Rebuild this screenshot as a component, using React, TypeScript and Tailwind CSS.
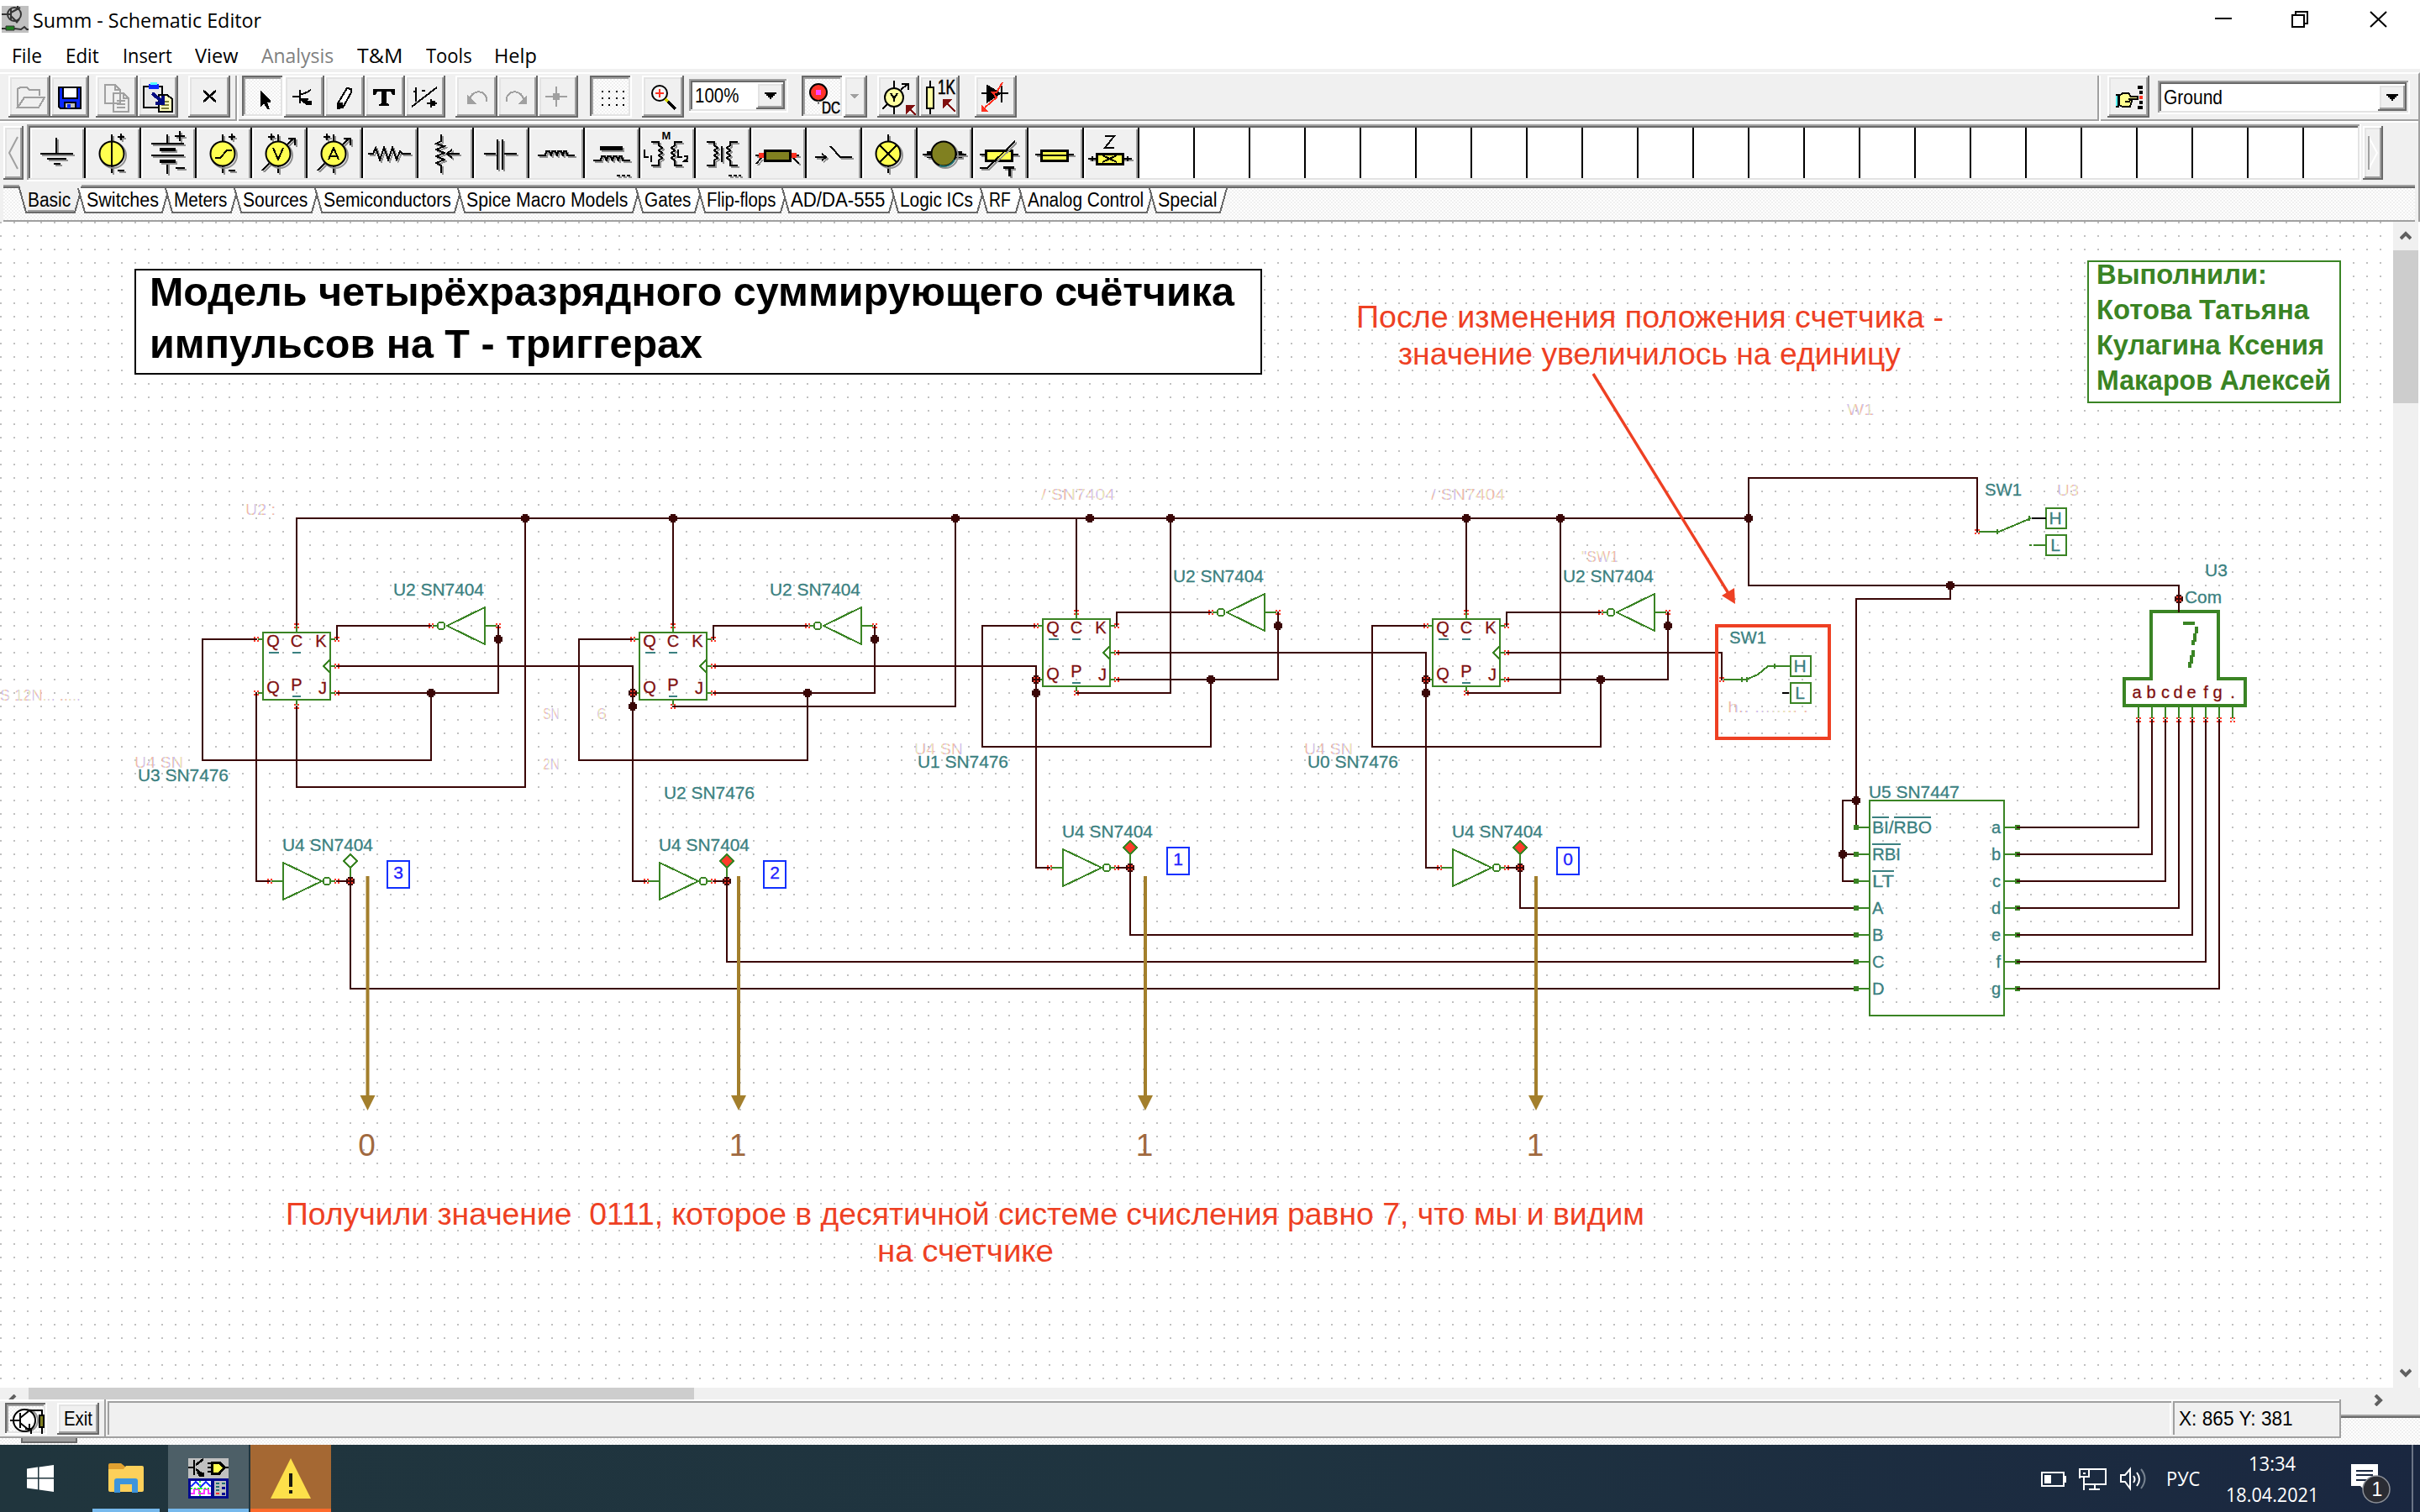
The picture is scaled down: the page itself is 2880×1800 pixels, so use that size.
import { useLayoutEffect, useRef, useState, type ReactNode } from "react";

const RAISED =
  "bg-[#f0f0f0] shadow-[inset_-2px_-2px_#696969,inset_2px_2px_#fff,inset_-4px_-4px_#a0a0a0,inset_4px_4px_#e3e3e3]";
const DITHER = "bg-[repeating-conic-gradient(#fff_0_25%,#f0f0f0_0_50%)] bg-[length:4px_4px]";
const SUNKEN =
  "bg-[repeating-conic-gradient(#fff_0_25%,#f0f0f0_0_50%)] bg-[length:4px_4px] shadow-[inset_-2px_-2px_#fff,inset_2px_2px_#696969,inset_-4px_-4px_#e3e3e3,inset_4px_4px_#a0a0a0]";
const FIELD =
  "bg-white shadow-[inset_-2px_-2px_#fff,inset_2px_2px_#a0a0a0,inset_-4px_-4px_#e3e3e3,inset_4px_4px_#696969]";

/* Text squeezed or stretched to a fixed width. */
function Fit({ w, children, className = "" }: { w: number; children: string; className?: string }) {
  const ref = useRef<HTMLSpanElement>(null);
  const [s, setS] = useState(1);
  useLayoutEffect(() => {
    if (ref.current) setS(w / ref.current.offsetWidth);
  }, [w]);
  return (
    <span className={"inline-block whitespace-nowrap " + className} style={{ width: w }}>
      <span ref={ref} className="inline-block origin-left" style={{ transform: `scaleX(${s})` }}>
        {children}
      </span>
    </span>
  );
}

function Btn({ w, ml = 0, pressed, children }: { w: number; ml?: number; pressed?: boolean; children?: ReactNode }) {
  return (
    <div className={"h-[50px] shrink-0 " + (pressed ? SUNKEN : RAISED)} style={{ width: w, marginLeft: ml }}>
      <svg width={w} height="50" viewBox={`0 0 ${w} 50`} fill="none" stroke="#000" strokeWidth="2" shapeRendering="crispEdges">
        {children}
      </svg>
    </div>
  );
}

function Etched({ ml }: { ml: number }) {
  return <div className="h-[54px] w-1 shrink-0 self-start border-l-2 border-r-2 border-l-[#a0a0a0] border-r-white" style={{ marginLeft: ml }} />;
}

function DropArrow() {
  return (
    <div className={"flex h-full w-[34px] items-center justify-center " + RAISED}>
      <svg width="14" height="8" viewBox="0 0 14 8" shapeRendering="crispEdges">
        <path d="M0 0h14v2h-2v2h-2v2h-2v2h-2v-2h-2v-2h-2v-2h-2z" />
      </svg>
    </div>
  );
}

function Toolbar() {
  return (
    <div className="flex h-14 items-start border-b-2 border-[#a0a0a0] bg-[#f0f0f0] pt-[2px]">
      <Btn w={50} ml={10}>
        <path stroke="#a0a0a0" d="M11 38V16l3-2h8l3 3h12v7M11 38l8-12h24l-7 12z" />
      </Btn>
      <Btn w={46}>
        <path fill="#0a28ff" d="M10 14h26v25H12l-2-2z" />
        <path fill="#fff" stroke="#000" d="M15 14h17v13H15z" />
        <path fill="#c0c0c0" d="M17 32h13v7H17z" />
        <path fill="#0a28ff" stroke="none" d="M20 34h4v5h-4z" />
      </Btn>
      <Btn w={50} ml={8}>
        <path stroke="#a0a0a0" fill="#f0f0f0" d="M11 11h12l6 6v16H11zM21 21h12l6 6v16H21z" />
        <path stroke="#a0a0a0" d="M23 11v6h6M33 21v6h6M25 30h10M25 34h10M25 38h10" />
      </Btn>
      <Btn w={48}>
        <path fill="#e8e8e8" d="M7 13h22v25H7z" />
        <path fill="#0a28ff" stroke="none" d="M13 10h12v6H13z" />
        <path fill="#5ff" stroke="none" d="M15 8h8v3h-8z" />
        <path fill="#ffffc0" d="M25 23h10l6 5v15H25z" />
        <path stroke="#80803a" d="M28 31h9M28 35h9M28 39h9" />
        <path stroke="#000a80" strokeWidth="4" d="M17 21l12 10M30 24v9h-9" />
      </Btn>
      <Btn w={50} ml={12}>
        <path d="M18 18l15 13M33 18l-15 13" strokeWidth="2.6" />
      </Btn>
      <Etched ml={6} />
      <Btn w={50} ml={4} pressed>
        <path fill="#000" stroke="none" d="M22 17v20l4-4 4 7h3l-3-8h4v-2z" />
      </Btn>
      <Btn w={48}>
        <path d="M10 25h9M19 17v16M19 23l8-3 5-3M19 28l5 4" />
        <path fill="#000" d="M22 28h5v3h5v3h-5z M27 28h2" />
      </Btn>
      <Btn w={48}>
        <path fill="#fff" d="M16 33l11-18 5 1v4L22 38l-6 1z" />
        <path fill="#000" d="M16 33h5l1 4-6 2z" />
      </Btn>
      <Btn w={48}>
        <path fill="#000" stroke="none" d="M10 16h26v7h-3l-2-4h-5v14l3 1v2H17v-2l3-1V19h-5l-2 4h-3z" />
      </Btn>
      <Btn w={48}>
        <path d="M8 37L38 14M13 14v17M10 19h3M20 18h4M26 33h12" />
        <path fill="#000" d="M31 28v10M31 31h4v4h-4z" />
      </Btn>
      <Btn w={50} ml={12}>
        <path stroke="#a0a0a0" d="M17 28c3-13 22-11 20 3" />
        <path fill="#a0a0a0" stroke="none" d="M14 23v11h11z" />
      </Btn>
      <Btn w={48}>
        <path stroke="#a0a0a0" d="M11 31c-2-14 17-16 20-3" />
        <path fill="#a0a0a0" stroke="none" d="M35 23v11H24z" />
      </Btn>
      <Btn w={48}>
        <path stroke="#a0a0a0" d="M9 25h26M22 13v24" />
        <path fill="#a0a0a0" stroke="none" d="M18 21h8v8h-8z" />
      </Btn>
      <Btn w={50} ml={14} pressed>
        <path strokeDasharray="2 6.3" d="M14 19h27M14 27h27M14 35h27" />
      </Btn>
      <Btn w={50} ml={12}>
        <circle cx="21" cy="21" r="9" fill="#f5f5f5" shapeRendering="auto" />
        <path stroke="#ff3020" d="M16 21h10M21 16v10" />
        <path stroke="#d8d800" strokeWidth="3" d="M28 28l4 4" />
        <path strokeWidth="4" d="M31 31l9 9" />
      </Btn>
      <div className={"ml-[6px] mt-1 flex h-10 w-[118px] items-center justify-between p-1 pl-[7px] text-[24px] leading-none " + FIELD}>
        <Fit w={52}>100%</Fit>
        <DropArrow />
      </div>
      <Btn w={50} ml={16} pressed>
        <circle cx="20" cy="20" r="10" fill="#ff3328" shapeRendering="auto" />
        <path stroke="none" fill="#f4f" d="M17 17h6v6h-6z" />
        <path d="M20 30v4" stroke="#808080" />
        <text x="24" y="45" fontSize="20" fill="#000" strokeWidth="0.6" textLength="22" lengthAdjust="spacingAndGlyphs">DC</text>
      </Btn>
      <Btn w={28}>
        <path fill="#a0a0a0" stroke="none" d="M8 22h10l-5 6z" />
      </Btn>
      <Btn w={50} ml={12}>
        <path d="M20 6v10M20 36v10M6 40l8-8M28 17l8-7M29 10h8v7" />
        <circle cx="20" cy="26" r="11" fill="#ffffa0" shapeRendering="auto" />
        <path d="M16 21l4 6 4-6M20 27v4" />
        <path fill="#801010" stroke="#801010" d="M35 36h8l-8 8zM37 38l9 9" />
      </Btn>
      <Btn w={48}>
        <path d="M13 6v40" />
        <path fill="#ffffa0" d="M9 14h8v25H9z" />
        <text x="22" y="22" fontSize="23" fill="#000" strokeWidth="0.6" textLength="21" lengthAdjust="spacingAndGlyphs">1K</text>
        <path fill="#801010" stroke="#801010" d="M29 29h8l-8 8zM31 31l12 12" />
      </Btn>
      <Btn w={50} ml={18}>
        <path d="M8 21h32M32 12v20" />
        <path fill="#000" d="M15 12l15 9-15 10z" />
        <path stroke="#ff3020" d="M33 8l-7 12h-5l5 6-14 12" />
        <path fill="#ff3020" stroke="none" d="M8 34v9h8z" />
      </Btn>
      <div className="ml-auto flex w-[382px]">
        <Etched ml={0} />
        <Btn w={50} ml={8}>
          <path fill="#5ff" stroke="none" d="M10 22h4v14h-4z" />
          <path fill="#ffff90" d="M14 24l4-3h7l3 4h8v3H25l4 2-2 7h-9l-4-2z" />
          <path d="M10 23h3v14h-3M21 31h6" />
          <path fill="#000" stroke="none" d="M36 12h6v4h-6zM38 18h4v4h-4zM38 30h4v4h-4zM36 36h6v4h-6z" />
          <path fill="#ff3020" stroke="none" d="M38 24h4v4h-4z" />
        </Btn>
        <div className={"ml-[10px] mt-[6px] flex h-10 w-[300px] items-center justify-between p-1 pl-[7px] text-[24px] leading-none " + FIELD}>
          <Fit w={70}>Ground</Fit>
          <DropArrow />
        </div>
      </div>
    </div>
  );
}

/* Black strokes over a soft grey drop shadow. */
function Ink({ d, w = 2 }: { d: string; w?: number }) {
  return (
    <>
      <path d={d} stroke="#909090" strokeWidth={w} transform="translate(2 2)" />
      <path d={d} stroke="#000" strokeWidth={w} />
    </>
  );
}
function Round({ fill = "#ffff50" }: { fill?: string }) {
  return (
    <>
      <circle cx="33" cy="33" r="15" stroke="#909090" shapeRendering="auto" />
      <circle cx="31" cy="31" r="14.5" fill={fill} stroke="#000" shapeRendering="auto" />
    </>
  );
}
const COIL_V = "M13 17h9v4l4 3-4 3 4 3-4 3 4 3-4 3v6h-9";
const COIL_R = "M50 17h-9v4l-4 3 4 3-4 3 4 3-4 3 4 3v6h9";

const PARTS: ReactNode[] = [
  <Ink d="M31 12v18M12 31h39M20 37h23M28 43h8" />,
  <><Ink d="M31 8v46M38 11h8M42 7v8M38 51h8" /><Round /><path d="M31 16v30" stroke="#000" /></>,
  <><Ink d="M31 8v11M12 19h39M12 33h39M31 42v13M40 10h12M46 4v12M41 48h11" /><Ink w={4} d="M22 26h19M22 40h19" /></>,
  <><Ink d="M31 8v46M38 11h8M42 7v8M38 51h8" /><Round /><path d="M22 36h6l8-9h6" stroke="#000" /></>,
  <><Ink d="M31 8v46M19 11h8M23 7v8M12 51l38-39M43 13h8v8" /><Round /><path d="M25 24l6 14 6-14" stroke="#000" /></>,
  <><Ink d="M31 8v46M19 11h8M23 7v8M12 51l38-39M43 13h8v8" /><Round /><path d="M25 38l6-14 6 14M27 34h8" stroke="#000" /></>,
  <Ink d="M6 31h6l3-7 5 14 5-14 5 14 5-14 5 14 4-10 3 3h10" />,
  <Ink d="M27 8v8l-6 3 10 3-10 4 10 4-10 4 10 4-10 4 6 3v9M49 31H34M40 26l-6 5 6 5" />,
  <Ink d="M12 31h14M28 14v36M34 14v36M36 31h15" />,
  <Ink d="M10 33h9l1-5h4l2 6 1-6h4l2 6 1-6h4l2 6 1-6h3l1 5h9" />,
  <><Ink w={5} d="M18 24h27" /><Ink d="M10 39h9l1-5h4l2 6 1-6h4l2 6 1-6h4l2 6 1-6h3l1 5h9M38 57h4M44 57h4M50 57h4" /></>,
  <><Ink d={COIL_V} /><Ink d={COIL_R} /><text x="31" y="14" fontSize="13" fontWeight="bold" textAnchor="middle" fill="#000">M</text><path stroke="#000" d="M5 26v9h5M13 33v8M45 26v9h5M52 34h4v3l-4 3h5" /></>,
  <><Ink d={COIL_V} /><Ink d={COIL_R} /><Ink d="M31 22v19M39 57h4M45 57h4M51 57h3" /></>,
  <><Ink d="M5 33h8M49 33h8M12 36l-6 7M50 36l7 7" /><path fill="#ff3020" d="M9 30h6v6H9zM48 30h6v6h-6z" /><path fill="#808020" stroke="#000" strokeWidth="3" d="M16 27h30v12H16z" /></>,
  <Ink d="M10 35h12M18 31l5 4-5 4M28 22l12 13h14" />,
  <><Ink d="M31 8v46" /><Round /><path d="M21 21l20 20M41 21L21 41" stroke="#000" /></>,
  <><Ink w={8} d="M11 32h42" /><Ink d="M6 32h52" /><Round fill="#808020" /><path d="M44 38a14 14 0 0 1-18 7" stroke="#207070" shapeRendering="auto" /></>,
  <><Ink d="M8 32h46" /><path fill="#ffff50" stroke="#000" strokeWidth="3" d="M15 27h31v12H15z" /><Ink d="M8 48h9L50 16" /><Ink w={3} d="M36 47h13M43 47v11" /></>,
  <><Ink d="M8 32h46" /><path fill="#ffff50" stroke="#000" strokeWidth="3" d="M15 27h31v12H15z" /><path stroke="#000" d="M15 33h31" /></>,
  <><Ink d="M5 37h52" /><path fill="#ffff50" stroke="#000" strokeWidth="3" d="M15 31h31v12H15z" /><path stroke="#000" d="M22 33l17 8M39 33l-17 8M10 34v6M52 34v6M25 10h11L25 24h11" /></>,
];

function Palette() {
  return (
    <div className="flex h-[76px] items-start border-t-2 border-white bg-[#f0f0f0] pt-[2px]">
      <div className={"ml-1 mt-[2px] flex h-16 w-6 items-center justify-center " + RAISED}>
        <svg width="12" height="40" viewBox="0 0 12 40" fill="none" stroke="#a0a0a0" strokeWidth="2"><path d="M11 1L1 20l10 19" /></svg>
      </div>
      <div className={"ml-1 flex h-[68px] w-[2778px] overflow-hidden py-1 pl-1 " + FIELD}>
        {Array.from({ length: 42 }, (_, i) => (
          <div
            key={i}
            className={
              "h-[60px] w-[66px] shrink-0 " +
              (i < 41 ? "border-r-2 border-black " : "") +
              (i < 20 ? "bg-[#f0f0f0] shadow-[inset_2px_2px_#fff,inset_-2px_0_#a0a0a0]" : "")
            }
          >
            {PARTS[i] && (
              <svg width="64" height="60" viewBox="0 0 64 60" fill="none" strokeWidth="2" shapeRendering="crispEdges">
                {PARTS[i]}
              </svg>
            )}
          </div>
        ))}
      </div>
      <div className={"ml-[2px] mt-[2px] flex h-16 w-6 items-center justify-center " + RAISED}>
        <svg width="12" height="40" viewBox="0 0 12 40" fill="none" strokeWidth="2"><path stroke="#fff" d="M1 39l10-19L1 1" /><path stroke="#a0a0a0" d="M1 0v40" /></svg>
      </div>
    </div>
  );
}

/* label, width of the bottom edge, gap to the next tab, text width */
const TABS: [string, number, number, number][] = [
  ["Basic", 60, 10, 51],
  ["Switches", 94, 10, 86],
  ["Meters", 72, 10, 63],
  ["Sources", 86, 10, 77],
  ["Semiconductors", 160, 10, 152],
  ["Spice Macro Models", 202, 10, 192],
  ["Gates", 64, 10, 55],
  ["Flip-flops", 92, 8, 82],
  ["AD/DA-555", 121, 9, 112],
  ["Logic ICs", 96, 10, 87],
  ["RF", 36, 10, 26],
  ["Analog Control", 146, 9, 138],
  ["Special", 78, 10, 70],
];

function Tabs() {
  return (
    <div className={"flex h-[44px] items-start border-b-2 border-[#a0a0a0] pl-[26px] shadow-[inset_0_2px_#a0a0a0,inset_0_4px_#696969] " + DITHER}>
      {TABS.map(([t, w, g, tw], i) => (
        <div key={t} className="relative h-9 shrink-0 text-[23px] leading-[37px] text-black" style={{ width: w, marginRight: g }}>
          <svg className="absolute -left-2 top-0 overflow-visible" width={w + 16} height="36" viewBox={`-8 0 ${w + 16} 36`} shapeRendering="crispEdges">
            <path d={`M-7 ${i ? 4 : 0}L1 33H${w - 1}L${w + 7} ${i ? 4 : 0}z`} fill={i ? "#fff" : "#f0f0f0"} />
            <path d={`M-7 4L1 33H${w - 1}L${w + 7} 4`} fill="none" stroke="#696969" strokeWidth="2" />
            {i === 0 && <path d={`M3 31H${w - 2}`} stroke="#a0a0a0" strokeWidth="2" />}
          </svg>
          <Fit w={tw} className="relative ml-[3px]">{t}</Fit>
        </div>
      ))}
    </div>
  );
}

/* ---------- schematic ---------- */
const WIRE = "#3a0606";
const GREEN = "#3a8424";
const TEAL = "#3a8080";
const RED = "#ff3b2b";
const X = (i: number) => 16 * i + 1;
const Y = (j: number) => 16 * j + 9;

function Wire({ p }: { p: number[][] }) {
  return <polyline points={p.map(([i, j]) => `${X(i)},${Y(j)}`).join(" ")} fill="none" stroke={WIRE} strokeWidth="2" strokeLinecap="square" />;
}
function Node({ i, j, hot }: { i: number; j: number; hot?: boolean }) {
  return (
    <>
      <path d={`M${X(i) - 3} ${Y(j) - 5}h6v2h2v6h-2v2h-6v-2h-2v-6h2z`} fill={WIRE} />
      {hot && <Pin x={X(i)} y={Y(j)} />}
    </>
  );
}
function Pin({ x, y }: { x: number; y: number }) {
  return <path d={`M${x - 3} ${y - 3}h2v2h-2zM${x + 1} ${y - 3}h2v2h-2zM${x - 3} ${y + 1}h2v2h-2zM${x + 1} ${y + 1}h2v2h-2z`} fill={RED} />;
}
function Label({ x, y, w, children, fill = TEAL, size = 21, anchor = "start" }: { x: number; y: number; w?: number; children: string; fill?: string; size?: number; anchor?: "start" | "middle" | "end" }) {
  return (
    <text x={x} y={y} fill={fill} fontSize={size} textAnchor={anchor} textLength={w} lengthAdjust="spacingAndGlyphs" stroke={fill} strokeWidth="0.3">
      {children}
    </text>
  );
}

function Stage({ dx, dy, name, bit, lit, labelAt }: { dx: number; dy: number; name: string; bit: string; lit?: boolean; labelAt?: [number, number] }) {
  const [lx, ly] = labelAt ?? [164, 930];
  return (
    <g transform={`translate(${dx * 16} ${dy * 16})`}>
      <Wire p={[[19, 47], [15, 47], [15, 56], [32, 56], [32, 51]]} />
      <Wire p={[[25, 51], [37, 51], [37, 46]]} />
      <Wire p={[[25, 47], [25, 46], [32, 46]]} />
      <Wire p={[[19, 51], [19, 65], [20, 65]]} />
      <Wire p={[[25, 65], [26, 65]]} />
      <g fill="none" stroke={GREEN} strokeWidth="2">
        <path d="M313 753h80v80h-80zM353 745v8M353 833v6M307 761h6M307 825h6M393 761h6M393 793h6M393 825h6M393 785l-8 8 8 8" />
        <path d="M577 723v44l-45-22zM577 745h14M515 745h5" />
        <path d="M337 1027v44l46-22zM323 1049h14M394 1049h5M417 1033v14" />
        <circle cx="525" cy="745" r="4.5" /><circle cx="389" cy="1049" r="4.5" />
        <path d="M417 1017l8 8-8 8-8-8z" fill={lit ? RED : "#fff"} />
      </g>
      {[[305, 761], [305, 825], [401, 761], [401, 793], [401, 825], [353, 745], [353, 841], [513, 745], [593, 745], [321, 1049], [401, 1049]].map(([x, y]) => (
        <Pin key={x + "," + y} x={x} y={y} />
      ))}
      <Node i={32} j={51} />
      <Node i={37} j={47} />
      <Node i={26} j={65} hot />
      {dx > 0 && <><Node i={19} j={51} hot /><Node i={19} j={52} /></>}
      <g fill="#801010" stroke="#801010" strokeWidth="0.3" fontSize="20" textAnchor="middle">
        <text x="325" y="770">Q</text><text x="353" y="770">C</text><text x="382" y="770">K</text>
        <text x="325" y="825">Q</text><text x="353" y="822">P</text><text x="384" y="826">J</text>
      </g>
      <path d="M320 777h12M348 777h10M348 829h10" stroke={TEAL} strokeWidth="2" />
      <Label x={468} y={709} w={108}>U2 SN7404</Label>
      <Label x={336} y={1013} w={108}>U4 SN7404</Label>
      <Label x={lx} y={ly} w={108}>{name}</Label>
      <rect x="461" y="1025" width="26" height="32" fill="#fff" stroke="#1030ff" strokeWidth="2" />
      <Label x={474} y={1046} fill="#2020ff" anchor="middle">{bit}</Label>
    </g>
  );
}

/* Faded leftovers of labels that were moved. */
function Ghost({ x, y, w, children }: { x: number; y: number; w: number; children: string }) {
  return (
    <text x={x} y={y} textLength={w} lengthAdjust="spacingAndGlyphs" fill="url(#fade)" fontSize="19">
      {children}
    </text>
  );
}

const SEG = ["a", "b", "c", "d", "e", "f", "g"];
const BUS = [61, 63, 65, 67, 69, 71, 73];

function Schematic() {
  return (
    <svg width="2848" height="1388" viewBox="0 264 2848 1388" className="block bg-white" shapeRendering="crispEdges">
      <defs>
        <pattern id="grid" width="16" height="16" patternUnits="userSpaceOnUse" y="8"><rect width="2" height="2" fill="#c0c0c0" /></pattern>
        <linearGradient id="fade" gradientUnits="userSpaceOnUse" x1="0" y1="0" x2="6" y2="0" spreadMethod="repeat">
          <stop offset="0" stopColor="#f3b8ac" /><stop offset=".33" stopColor="#f3b8ac" />
          <stop offset=".34" stopColor="#cdbff0" /><stop offset=".66" stopColor="#cdbff0" />
          <stop offset=".67" stopColor="#e6e6b8" /><stop offset="1" stopColor="#e6e6b8" />
        </linearGradient>
      </defs>
      <rect y="264" width="2848" height="1388" fill="url(#grid)" />

      <Ghost x={292} y={613} w={36}>U2 :</Ghost>
      <Ghost x={1239} y={595} w={88}>/ SN7404</Ghost>
      <Ghost x={1703} y={595} w={88}>/ SN7404</Ghost>
      <Ghost x={1882} y={669} w={44}>"SW1</Ghost>
      <Ghost x={2198} y={494} w={32}>W1</Ghost>
      <Ghost x={2448} y={590} w={26}>U3</Ghost>
      <Ghost x={646} y={856} w={20}>SN</Ghost>
      <Ghost x={710} y={856} w={12}>6</Ghost>
      <Ghost x={646} y={916} w={20}>2N</Ghost>
      <Ghost x={0} y={834} w={96}>S 12N... .....</Ghost>
      <Ghost x={160} y={914} w={58}>U4 SN</Ghost>
      <Ghost x={1088} y={898} w={58}>U4 SN</Ghost>
      <Ghost x={1552} y={898} w={58}>U4 SN</Ghost>
      <Ghost x={2056} y={848} w={96}>h.. ........ .</Ghost>

      <Wire p={[[22, 46], [22, 38], [130, 38]]} />
      <Wire p={[[22, 52], [22, 58], [39, 58], [39, 38]]} />
      <Wire p={[[50, 46], [50, 38]]} />
      <Wire p={[[50, 52], [71, 52], [71, 38]]} />
      <Wire p={[[80, 45], [80, 38]]} />
      <Wire p={[[80, 51], [87, 51], [87, 38]]} />
      <Wire p={[[109, 45], [109, 38]]} />
      <Wire p={[[109, 51], [116, 51], [116, 38]]} />
      <Wire p={[[25, 49], [47, 49], [47, 51]]} />
      <Wire p={[[53, 49], [77, 49], [77, 50]]} />
      <Wire p={[[83, 48], [106, 48], [106, 50]]} />
      <Wire p={[[112, 48], [128, 48], [128, 50]]} />
      <Wire p={[[147, 39], [147, 35], [130, 35], [130, 43], [162, 43], [162, 45]]} />
      <Wire p={[[145, 43], [145, 44], [138, 44], [138, 61]]} />
      <Wire p={[[138, 59], [137, 59], [137, 65], [138, 65]]} />
      <Wire p={[[137, 63], [138, 63]]} />
      <Wire p={[[26, 65], [26, 73], [138, 73]]} />
      <Wire p={[[54, 65], [54, 71], [138, 71]]} />
      <Wire p={[[84, 64], [84, 69], [138, 69]]} />
      <Wire p={[[113, 64], [113, 67], [138, 67]]} />

      <Stage dx={0} dy={0} name="U3 SN7476" bit="3" />
      <Stage dx={28} dy={0} name="U2 SN7476" bit="2" lit labelAt={[342, 951]} />
      <Stage dx={58} dy={-1} name="U1 SN7476" bit="1" lit />
      <Stage dx={87} dy={-1} name="U0 SN7476" bit="0" lit />
      {[[39, 38], [50, 38], [71, 38], [81, 38], [87, 38], [109, 38], [116, 38], [130, 38], [145, 43], [138, 59], [137, 63]].map(([i, j]) => (
        <Node key={i + "," + j} i={i} j={j} />
      ))}

      {/* BCD decoder */}
      <rect x="2225" y="953" width="160" height="256" fill="none" stroke={GREEN} strokeWidth="2" />
      <Label x={2224} y={950} w={108}>U5 SN7447</Label>
      {BUS.map((j, k) => (
        <g key={j}>
          <Wire p={[[150, j], [159 + k, j], [159 + k, 53]]} />
          <path d={`M${X(138)} ${Y(j)}h16M${X(149)} ${Y(j)}h16`} stroke={GREEN} strokeWidth="2" />
          <rect x={X(138) - 3} y={Y(j) - 3} width="6" height="6" fill={GREEN} />
          <rect x={X(150) - 3} y={Y(j) - 3} width="6" height="6" fill={GREEN} />
          <rect x={X(150) - 1} y={Y(j) - 1} width="4" height="2" fill={WIRE} />
          <Label x={2381} y={992 + 32 * k} anchor="end" size={20}>{SEG[k]}</Label>
          <path d={`M${X(159 + k)} 842v13`} stroke={GREEN} strokeWidth="2" />
          <Pin x={X(159 + k)} y={857} />
        </g>
      ))}
      <Label x={2228} y={992} w={71}>BI/RBO</Label>
      <Label x={2228} y={1024} w={34}>RBI</Label>
      <Label x={2228} y={1056} w={26}>LT</Label>
      {["A", "B", "C", "D"].map((t, k) => <Label key={t} x={2228} y={1088 + 32 * k} size={20}>{t}</Label>)}
      <path d="M2228 973h20M2254 973h44M2228 1005h34M2228 1037h26" stroke={TEAL} strokeWidth="2" />

      {/* seven-segment indicator */}
      <path d="M2528 808h32v-80h80v80h32v32h-144z" fill="#fff" stroke={GREEN} strokeWidth="4" />
      <path d="M2593 729v-20" stroke={WIRE} strokeWidth="2" />
      <path d="M2598 742h14M2614 746v8M2612 754v10M2610 762v6M2610 774v8M2608 780v10M2606 788v7" stroke={GREEN} strokeWidth="4" />
      <path d="M2657 842v13" stroke={GREEN} strokeWidth="2" />
      <Pin x={2657} y={857} />
      <Node i={162} j={44} hot />
      {[["a", 2543], ["b", 2560], ["c", 2577], ["d", 2592], ["e", 2608], ["f", 2625], ["g", 2639], [".", 2657]].map(([t, x]) => (
        <Label key={t} x={Number(x)} y={831} size={20} anchor="middle" fill="#801010">{String(t)}</Label>
      ))}
      <Label x={2624} y={686}>U3</Label>
      <Label x={2600} y={718} w={44}>Com</Label>

      {/* logic switches */}
      <Label x={2362} y={590} w={44}>SW1</Label>
      <g fill="none" stroke={GREEN} strokeWidth="2">
        <path d="M2435 605h24v24h-24zM2435 637h24v24h-24zM2355 633h24l38-16M2377 630v6M2415 614v6M2415 649h3M2420 649h15" />
        <path d="M2131 781h24v24h-24zM2131 813h24v24h-24zM2051 809h27l14-6 12-10h27M2073 806v6M2079 806v6M2112 790v6" />
      </g>
      <path d="M2418 617h17M2121 825h8" stroke="#000" strokeWidth="2" />
      <Pin x={2353} y={633} /><Pin x={2049} y={809} />
      <Label x={2446} y={624} anchor="middle">H</Label>
      <Label x={2446} y={656} anchor="middle">L</Label>
      <Label x={2142} y={800} anchor="middle">H</Label>
      <Label x={2142} y={832} anchor="middle">L</Label>
      <Label x={2058} y={766} w={44}>SW1</Label>

      {/* captions */}
      <rect x="161" y="321" width="1340" height="124" fill="#fff" stroke="#000" strokeWidth="2" />
      <g fontWeight="bold" fontSize="49" fill="#000">
        <text x="178" y="364" textLength="1291" lengthAdjust="spacingAndGlyphs">Модель четырёхразрядного суммирующего счётчика</text>
        <text x="178" y="426" textLength="658" lengthAdjust="spacingAndGlyphs">импульсов на Т - триггерах</text>
      </g>
      <rect x="2485" y="311" width="300" height="168" fill="#fff" stroke={GREEN} strokeWidth="2" />
      <g fontWeight="bold" fontSize="33" fill={GREEN}>
        <text x="2495" y="338" textLength="203" lengthAdjust="spacingAndGlyphs">Выполнили:</text>
        <text x="2495" y="380" textLength="253" lengthAdjust="spacingAndGlyphs">Котова Татьяна</text>
        <text x="2495" y="422" textLength="271" lengthAdjust="spacingAndGlyphs">Кулагина Ксения</text>
        <text x="2495" y="464" textLength="279" lengthAdjust="spacingAndGlyphs">Макаров Алексей</text>
      </g>

      {/* annotations */}
      <g fill="#ee4023" fontSize="37">
        <text x="1614" y="390" textLength="699" lengthAdjust="spacingAndGlyphs">После изменения положения счетчика -</text>
        <text x="1664" y="434" textLength="598" lengthAdjust="spacingAndGlyphs">значение увеличилось на единицу</text>
        <text x="340" y="1458" textLength="1617" lengthAdjust="spacingAndGlyphs" xmlSpace="preserve">Получили значение{"\u00a0 "}0111, которое в десятичной системе счисления равно 7, что мы и видим</text>
        <text x="1044" y="1502" textLength="210" lengthAdjust="spacingAndGlyphs">на счетчике</text>
      </g>
      <g shapeRendering="auto" fill="none" strokeWidth="4">
        <path d="M1896 445L2058 708" stroke="#ee4023" strokeWidth="3.4" />
        <path d="M2065 719l-16-10 15-9z" fill="#ee4023" stroke="none" />
        <rect x="2043" y="745" width="134" height="134" stroke="#ee4023" />
        {[437.5, 879, 1363, 1828].map((x, k) => (
          <g key={x}>
            <path d={`M${x} 1043V1308`} stroke="#a37f2c" />
            <path d={`M${x} 1322l-9-18h18z`} fill="#a37f2c" />
            <text x={x - 1} y="1376" fontSize="37" fill="#a0693f" textAnchor="middle">{k ? "1" : "0"}</text>
          </g>
        ))}
      </g>
    </svg>
  );
}

function Chevron({ r }: { r: string }) {
  return (
    <svg width="14" height="14" viewBox="0 0 14 14" className={r} fill="none" stroke="#606060" strokeWidth="4"><path d="M1 10l6-6 6 6" /></svg>
  );
}

function WorkArea() {
  return (
    <div className="flex h-[1388px]">
      <Schematic />
      <div className="flex w-8 flex-col items-center border-r-2 border-white bg-[#f0f0f0]">
        <div className="flex h-[34px] items-center"><Chevron r="" /></div>
        <div className="h-[182px] w-full bg-[#cdcdcd]" />
        <div className="mt-auto mb-[11px]"><Chevron r="rotate-180" /></div>
      </div>
    </div>
  );
}

function StatusBar() {
  return (
    <>
      <div className="flex h-[14px] overflow-hidden bg-[#f0f0f0]">
        <div className="flex w-[34px] justify-center pt-2 pr-1"><Chevron r="-rotate-90 shrink-0" /></div>
        <div className="w-[792px] bg-[#cdcdcd]" />
      </div>
      <div className={"flex h-[54px] " + DITHER}>
        <div className="w-[2786px]">
          <div className="flex h-[46px] items-stretch border-b-2 border-r-2 border-[#a0a0a0] bg-[#f0f0f0] shadow-[inset_0_2px_#fff]">
            <div className={"ml-[6px] mt-1 h-[38px] w-[50px] " + SUNKEN}>
              <svg width="50" height="38" viewBox="0 0 50 38" fill="none" stroke="#000" strokeWidth="2">
                <circle cx="26" cy="21" r="13" fill="#fff" stroke="#909090" />
                <circle cx="23" cy="21" r="13" fill="#fff" />
                <path d="M6 21h12M18 12v18M18 18l10-8M18 24l10 8M28 9h16v28M31 30v7M24 31h5v-6" />
                <path fill="#808020" d="M41 15h5v14h-5z" />
              </svg>
            </div>
            <div className={"ml-3 mt-1 flex h-[38px] w-[50px] items-center justify-center text-[24px] leading-none " + RAISED}>
              <Fit w={34}>Exit</Fit>
            </div>
            <div className="ml-[6px] w-[2px] bg-[#a0a0a0]" />
            <div className="ml-[2px] mt-[2px] mb-[2px] w-[2456px] border-l-2 border-t-2 border-[#a0a0a0] shadow-[inset_-2px_0_#fff]" />
            <div className="ml-[2px] mt-[2px] mb-[2px] flex flex-1 items-center border-l-2 border-t-2 border-[#a0a0a0] pl-[5px] text-[24px] leading-none">
              <Fit w={136}>X: 865 Y: 381</Fit>
            </div>
          </div>
          <div className="ml-[25px] h-[6px] w-[67px] border-x-2 border-b-2 border-[#696969] bg-[#a0a0a0]" />
        </div>
        <div className="relative h-[22px] flex-1 border-b-2 border-[#696969] bg-[#f0f0f0] shadow-[inset_0_-2px_#a0a0a0]">
          <div className="absolute -top-[6px] left-[37px]"><Chevron r="rotate-90" /></div>
        </div>
      </div>
    </>
  );
}

function TaskBar() {
  return (
    <div className="flex h-20 bg-gradient-to-r from-[#20353d] via-[#1f3440] to-[#1a2740] text-white">
      <div className="flex w-24 items-center justify-center">
        <svg width="32" height="32" viewBox="0 0 32 32" fill="#fff"><path d="M0 4.5L13 2.6V15H0zM14.5 2.4L32 0v15H14.5zM0 16.5h13v12.8L0 27.4zM14.5 16.5H32V32l-17.5-2.5z" /></svg>
      </div>
      <div className="ml-[14px] flex w-20 items-center justify-center border-b-4 border-[#76b9ed]">
        <svg width="42" height="36" viewBox="0 0 42 36" className="mt-1">
          <path d="M0 2q0-2 2-2h13l5 4v6H0z" fill="#e0a030" />
          <path d="M0 7h18l3-4h19q2 0 2 2v27q0 2-2 2H2q-2 0-2-2z" fill="#fdd05a" />
          <path d="M7 35V21q0-3 3-3h22q3 0 3 3v14h-7V25H14v10z" fill="#3d94dc" />
        </svg>
      </div>
      <div className="ml-[10px] flex w-24 items-center justify-center border-b-4 border-[#76b9ed] bg-[#4d5f67]">
        <svg width="48" height="48" viewBox="0 0 48 48" shapeRendering="crispEdges" fill="none" stroke="#000" strokeWidth="2" className="mt-1">
          <path fill="#c0c0c0" stroke="none" d="M0 0h48v24H0z" />
          <path d="M0 11h7M7 2v18M9 8l9-7M9 13l9 7M23 6h5M23 11h5M23 16h5M44 11h4" strokeWidth="2.5" />
          <path fill="#000" d="M12 18h6v3h-4z" />
          <path fill="#ffff50" d="M28 5h9l6 6-6 7h-9z" strokeWidth="3" />
          <path fill="#fff" stroke="#000a90" strokeWidth="3" d="M1 25h27v21H1zM29 25h17v21H29z" />
          <path stroke="#2038ff" d="M3 34l6-6 6 6 6-6 6 6" />
          <path stroke="#f3f" d="M3 42h4v-5h6v5h6v-5h5v5h3" />
          <path stroke="#3f3" strokeDasharray="2 2" d="M14 27v19M3 36h24" />
          <path fill="#c0c0c0" stroke="none" d="M31 27h14v18H31z" />
          <path stroke="#207070" d="M33 30h4M40 30h4M33 34h4M33 38h4" /><path stroke="#000a90" strokeWidth="3" d="M40 35h4M40 42h4" /><path stroke="#f33" d="M33 42h4" />
        </svg>
      </div>
      <div className="ml-[2px] flex w-24 items-center justify-center border-b-4 border-[#ff6a2b] bg-[#a56833]">
        <svg width="48" height="48" viewBox="0 0 48 48" className="mt-1"><path d="M24 0l24 48H0z" fill="#fde04a" /><path d="M22 18h4v16h-4zM22 38h4v4h-4z" fill="#1a1a10" /></svg>
      </div>
      <div className="ml-auto flex items-center">
        <svg width="128" height="30" viewBox="0 0 128 30" fill="none" stroke="#fff" strokeWidth="2" shapeRendering="crispEdges">
          <path d="M1 8h26v16H1zM29 12v8" /><path d="M4 11h8v10H4z" fill="#fff" stroke="none" />
          <path d="M57 4h20v18H51M47 14H46V4h11v9H47M51 13v16M64 22v6M57 28h13M50 9h3" />
          <path d="M95 11h5l6-7v23l-6-8h-5z" shapeRendering="auto" />
          <path d="M110 12q3 4 0 8M114 8q6 8 0 16" shapeRendering="auto" />
          <path d="M119 4q9 11 0 23" stroke="#76828f" shapeRendering="auto" />
        </svg>
        <Fit w={40} className="ml-[21px] text-[24px] leading-none font-['Open_Sans',sans-serif]">РУС</Fit>
        <div className="ml-[31px] flex w-[110px] flex-col items-center font-['Open_Sans',sans-serif] text-[24px] leading-[37px]">
          <Fit w={56}>13:34</Fit>
          <Fit w={110}>18.04.2021</Fit>
        </div>
        <svg width="48" height="48" viewBox="0 0 48 48" className="ml-[39px] mt-[14px]">
          <path d="M0 0h32v26H19v8l-8-8H0z" fill="#fff" />
          <path d="M6 8h20M6 13h20M6 19h14" stroke="#1a2740" strokeWidth="2" />
          <circle cx="30" cy="30" r="16" fill="#2a2c33" stroke="#8b8f96" strokeWidth="1.5" />
          <text x="31" y="38" textAnchor="middle" fontSize="23" fill="#fff">1</text>
        </svg>
        <div className="ml-6 mr-2 h-20 w-[2px] bg-[#6b7485]" />
      </div>
    </div>
  );
}

/* label, left margin, width */
const MENU: [string, number, number][] = [
  ["File", 14, 36], ["Edit", 28, 40], ["Insert", 28, 59], ["View", 27, 51], ["Analysis", 28, 86], ["T&M", 28, 54], ["Tools", 28, 55], ["Help", 26, 51],
];

export default function App() {
  return (
    <div className="flex h-[1800px] w-[2880px] flex-col overflow-hidden bg-white font-['Liberation_Sans',Arial,sans-serif] text-black">
      <div className="flex h-[46px] items-center font-['Open_Sans',sans-serif]">
        <svg width="32" height="32" viewBox="0 0 32 32" className="ml-[2px]" fill="none" stroke="#333">
          <path fill="#c0c0c0" stroke="none" d="M0 0h32v32H0z" />
          <circle cx="15" cy="10" r="8" strokeWidth="2" /><path d="M0 10h11M11 4v12M11 8l11-6M11 12l8 8M19 2v-2M21 16l-4 4" strokeWidth="2" />
          <path fill="#208020" d="M5 24h10v5H5z" /><path d="M0 27h5M15 27l8 1 4-3 3 3h2" strokeWidth="2" />
        </svg>
        <Fit w={272} className="ml-[5px] mt-[2px] text-[24px] leading-none">Summ - Schematic Editor</Fit>
        <div className="ml-auto mr-[39px] flex items-center">
          <svg width="205" height="20" viewBox="0 0 205 20" fill="none" stroke="#000" strokeWidth="2" shapeRendering="crispEdges">
            <path d="M0 9h20M92 5h14v14H92zM96 5V1h14v14h-4" />
            <path d="M185 1l19 18M204 1l-19 18" shapeRendering="auto" />
          </svg>
        </div>
      </div>
      <div className="flex h-10 items-center border-b-4 border-[#f0f0f0] pt-[3px] font-['Open_Sans',sans-serif] text-[24px] leading-none">
        {MENU.map(([t, ml, w]) => (
          <div key={t} className={t === "Analysis" ? "text-[#808080]" : ""} style={{ marginLeft: ml }}>
            <Fit w={w}>{t}</Fit>
          </div>
        ))}
      </div>
      <div className="border-r-2 border-t-2 border-r-[#a0a0a0] border-t-white">
        <Toolbar />
        <Palette />
        <div className="bg-[#f0f0f0] px-[4px]"><Tabs /></div>
      </div>
      <WorkArea />
      <StatusBar />
      <TaskBar />
    </div>
  );
}
